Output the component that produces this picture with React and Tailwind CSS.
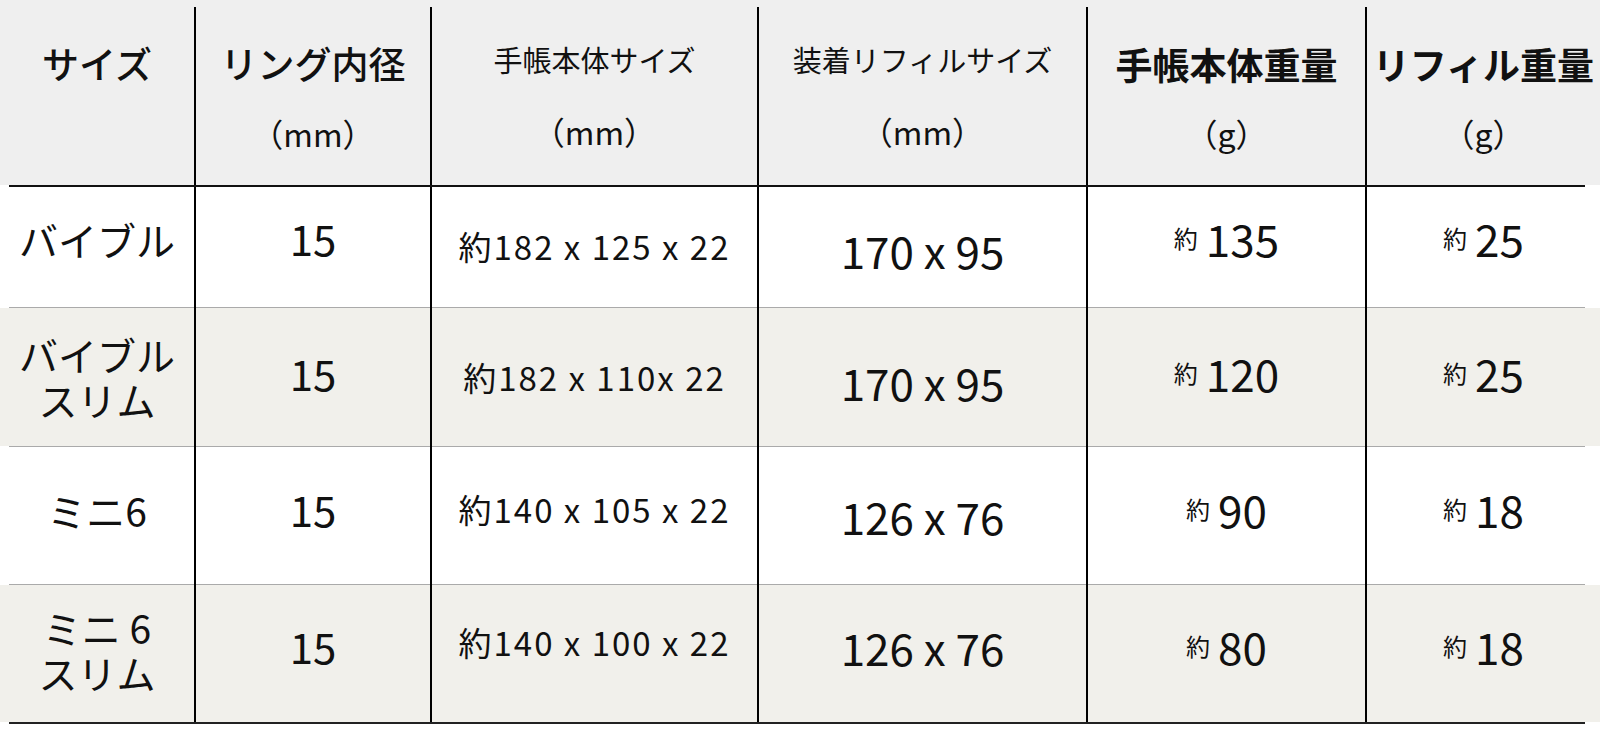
import React from 'react';

const cols = 'grid grid-cols-[194px_236px_327px_329px_279px_1fr]';

const rows = [
    {
        bg: 'bg-white',
        h: 'h-[120px]',
        name: ['バイブル'],
        ring: '15',
        body: '約182 x 125 x 22',
        refill: '170 x 95',
        w1: '135',
        w2: '25',
        pad: ['pb-[16px]', 'pb-[19px]', 'pb-[2px]', 'pt-[5px]', 'pb-[19px]', 'pb-[19px]'],
    },
    {
        bg: 'bg-[#f1f0eb]',
        h: 'h-[138px]',
        name: ['バイブル', 'スリム'],
        ring: '15',
        body: '約182 x 110x 22',
        refill: '170 x 95',
        w1: '120',
        w2: '25',
        pad: ['pb-0', 'pb-[8px]', 'pb-0', 'pt-[10px]', 'pb-[8px]', 'pb-[8px]'],
    },
    {
        bg: 'bg-white',
        h: 'h-[137px]',
        name: ['ミニ6'],
        ring: '15',
        body: '約140 x 105 x 22',
        refill: '126 x 76',
        w1: '90',
        w2: '18',
        pad: ['pb-[11px]', 'pb-[13px]', 'pb-[12px]', 'pb-0', 'pb-[13px]', 'pb-[13px]'],
    },
    {
        bg: 'bg-[#f1f0eb]',
        h: 'h-[137px]',
        name: ['ミニ 6', 'スリム'],
        ring: '15',
        body: '約140 x 100 x 22',
        refill: '126 x 76',
        w1: '80',
        w2: '18',
        pad: ['pb-[7px]', 'pb-[15px]', 'pb-[22px]', 'pb-[13px]', 'pb-[15px]', 'pb-[15px]'],
    },
];

// thin gray divider between body rows, vertical rules keep running through it
const Divider = () => (
    <div className={`${cols} h-px`}>
        <div className="ml-[9px] bg-[#aaaaaa]" />
        <div className="border-l-2 border-black bg-[#aaaaaa]" />
        <div className="border-l-2 border-black bg-[#aaaaaa]" />
        <div className="border-l-2 border-black bg-[#aaaaaa]" />
        <div className="border-l-2 border-black bg-[#aaaaaa]" />
        <div className="border-l-2 border-black bg-[#aaaaaa] mr-[15px]" />
    </div>
);

const Weight = ({ value }) => (
    <div className="flex items-center">
        <span className="text-[24px] leading-none">約</span>
        <span className="ml-2 text-[44px] leading-none">{value}</span>
    </div>
);

const App = () => {
    return (
        <div className="w-[1600px] h-[740px] bg-white text-[#111] font-['Noto_Sans_CJK_JP',sans-serif]">
            {/* Header */}
            <div className="bg-[#efefef] pt-[7px]">
                <div className={`${cols} h-[178px]`}>
                    <div className="flex flex-col items-center pt-[38px]">
                        <span className="text-[37px] leading-none font-medium">サイズ</span>
                    </div>
                    <div className="flex flex-col items-center pt-[38px] gap-[35px] border-l-2 border-black">
                        <span className="text-[37px] leading-none font-medium">リング内径</span>
                        <span className="text-[32px] leading-none">（mm）</span>
                    </div>
                    <div className="flex flex-col items-center pt-[38px] gap-[41px] border-l-2 border-black">
                        <span className="text-[29px] leading-none">手帳本体サイズ</span>
                        <span className="text-[32px] leading-none">（mm）</span>
                    </div>
                    <div className="flex flex-col items-center pt-[38px] gap-[41px] border-l-2 border-black">
                        <span className="text-[29px] leading-none">装着リフィルサイズ</span>
                        <span className="text-[32px] leading-none">（mm）</span>
                    </div>
                    <div className="flex flex-col items-center pt-[39px] gap-[34px] border-l-2 border-black">
                        <span className="text-[37px] leading-none font-bold">手帳本体重量</span>
                        <span className="text-[32px] leading-none">（g）</span>
                    </div>
                    <div className="flex flex-col items-center pt-[39px] gap-[34px] border-l-2 border-black">
                        <span className="text-[37px] leading-none font-bold">リフィル重量</span>
                        <span className="text-[32px] leading-none">（g）</span>
                    </div>
                </div>
            </div>
            <div className="h-[2px] ml-[9px] mr-[15px] bg-[#111]" />

            {/* Body rows */}
            {rows.map((row, i) => (
                <React.Fragment key={i}>
                    {i > 0 && <Divider />}
                    <div className={`${cols} ${row.h} ${row.bg}`}>
                        <div className={`flex flex-col items-center justify-center gap-[6px] ${row.pad[0]}`}>
                            {row.name.map((line) => (
                                <span key={line} className="text-[39px] leading-none">
                                    {line}
                                </span>
                            ))}
                        </div>
                        <div className={`flex items-center justify-center border-l-2 border-black ${row.pad[1]}`}>
                            <span className="text-[42px] leading-none">{row.ring}</span>
                        </div>
                        <div className={`flex items-center justify-center border-l-2 border-black ${row.pad[2]}`}>
                            <span className="text-[33px] leading-none tracking-[2px]">{row.body}</span>
                        </div>
                        <div className={`flex items-center justify-center border-l-2 border-black ${row.pad[3]}`}>
                            <span className="text-[44px] leading-none">{row.refill}</span>
                        </div>
                        <div className={`flex items-center justify-center border-l-2 border-black ${row.pad[4]}`}>
                            <Weight value={row.w1} />
                        </div>
                        <div className={`flex items-center justify-center border-l-2 border-black ${row.pad[5]}`}>
                            <Weight value={row.w2} />
                        </div>
                    </div>
                </React.Fragment>
            ))}
            <div className="h-[2px] ml-[9px] mr-[15px] bg-[#222]" />
        </div>
    );
};

export default App;
